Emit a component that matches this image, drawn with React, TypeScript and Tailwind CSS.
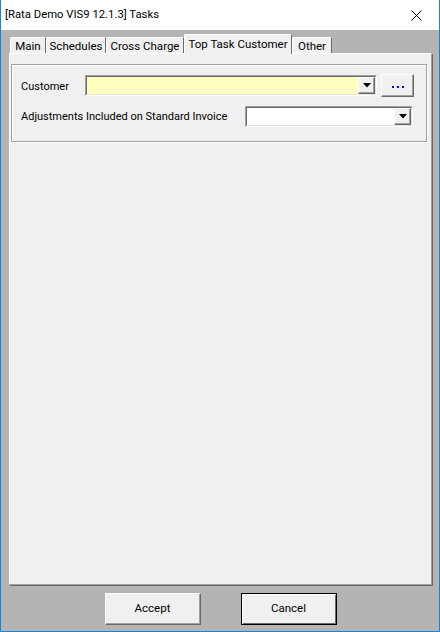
import React from "react";

const F = { fontFamily: 'Roboto, "Noto Sans", sans-serif' };

function DropBtn() {
  return (
    <div className="w-[17px] h-full bg-[#f0f0f0] border-t border-l border-t-white border-l-white border-r border-b border-r-[#696969] border-b-[#696969] shadow-[inset_-1px_-1px_0_#a0a0a0] flex items-center justify-center">
      <svg width="8" height="5" viewBox="0 0 8 5">
        <polygon points="0,0 8,0 4,4.5" fill="#000" />
      </svg>
    </div>
  );
}

function Combo({ w, bg }: { w: string; bg: string }) {
  return (
    <div className={`${w} h-[21px] ${bg} border border-t-[#a0a0a0] border-l-[#a0a0a0] border-r-white border-b-white flex`}>
      <div className="flex-1 border-t border-l border-t-[#696969] border-l-[#696969] border-r border-b border-r-[#e3e3e3] border-b-[#e3e3e3] flex justify-end">
        <DropBtn />
      </div>
    </div>
  );
}

function Tab({ label, w, selected }: { label: string; w: string; selected?: boolean }) {
  if (selected) {
    return (
      <div className={`${w} h-[20px] -mb-[1px] bg-[#f0f0f0] border-t border-l border-t-white border-l-white border-r border-r-[#696969] rounded-t-[2px] text-[11.5px] leading-[15px] text-black flex justify-center items-start pt-[2px] relative z-10 whitespace-nowrap`}>
        {label}
      </div>
    );
  }
  return (
    <div className={`${w} h-[16px] bg-[#f0f0f0] border-t border-l border-t-white border-l-white border-r border-r-[#696969] rounded-t-[2px] text-[11.5px] leading-[15px] text-black flex justify-center items-start pt-[1px] whitespace-nowrap`}>
      {label}
    </div>
  );
}

export default function App() {
  return (
    <div className="w-[440px] h-[632px] flex flex-col border-l border-r border-b border-[#1883d7] bg-[#b4b4b4]" style={F}>
      <div className="h-[30px] bg-white flex items-center justify-between pl-[4px] pr-[17px] shrink-0">
        <span className="text-[11.3px] text-black leading-none">[Rata Demo VIS9 12.1.3] Tasks</span>
        <svg width="11" height="11" viewBox="0 0 11 11">
          <path d="M0.5 0.5 L10.5 10.5 M10.5 0.5 L0.5 10.5" stroke="#000" strokeWidth="1" />
        </svg>
      </div>
      <div className="flex-1 flex flex-col pl-[8px] pr-[7px] pt-[4px]">
        <div className="h-[19px] flex items-end pl-[1px]">
          <Tab label="Main" w="w-[36px]" />
          <Tab label="Schedules" w="w-[60px]" />
          <Tab label="Cross Charge" w="w-[78px]" />
          <Tab label="Top Task Customer" w="w-[108px]" selected />
          <Tab label="Other" w="w-[40px]" />
        </div>
        <div className="h-[532px] bg-[#f0f0f0] border-t border-l border-t-white border-l-white border-r border-b border-r-[#a0a0a0] border-b-[#a0a0a0] shadow-[1px_1px_0_#696969] pt-[10px] pl-[1px] pr-[3px]">
          <div className="h-[78px] w-[416px] border border-[#a0a0a0] shadow-[inset_1px_1px_0_white,1px_1px_0_white] pt-[9px] pl-[9px] flex flex-col">
            <div className="flex items-center h-[23px]">
              <span className="w-[64px] text-[11px] text-black whitespace-nowrap pt-[3px]">Customer</span>
              <Combo w="w-[292px]" bg="bg-[#ffffc0]" />
              <div className="ml-[4px] w-[33px] h-[23px] bg-[#f0f0f0] border-t border-l border-t-white border-l-white border-r border-b border-r-[#696969] border-b-[#696969] shadow-[inset_-1px_-1px_0_#a0a0a0] flex items-center justify-center gap-[3px] pt-[2px]">
                <div className="w-[2px] h-[2px] bg-[#0000ff]" />
                <div className="w-[2px] h-[2px] bg-[#0000ff]" />
                <div className="w-[2px] h-[2px] bg-[#0000ff]" />
              </div>
            </div>
            <div className="flex items-center h-[21px] mt-[9px]">
              <span className="w-[224px] text-[11px] text-black whitespace-nowrap pt-[1px]">Adjustments Included on Standard Invoice</span>
              <Combo w="w-[168px]" bg="bg-white" />
            </div>
          </div>
        </div>
        <div className="flex justify-center gap-[40px] mt-[8px]">
          <button className="w-[96px] h-[32px] bg-[#f0f0f0] border-t border-l border-t-white border-l-white border-r border-b border-r-[#696969] border-b-[#696969] shadow-[inset_-1px_-1px_0_#a0a0a0] text-[11.5px] text-black">
            Accept
          </button>
          <button className="w-[96px] h-[32px] bg-[#f0f0f0] border border-black shadow-[inset_1px_1px_0_white,inset_-1px_-1px_0_#696969] text-[11.5px] text-black">
            Cancel
          </button>
        </div>
      </div>
    </div>
  );
}
